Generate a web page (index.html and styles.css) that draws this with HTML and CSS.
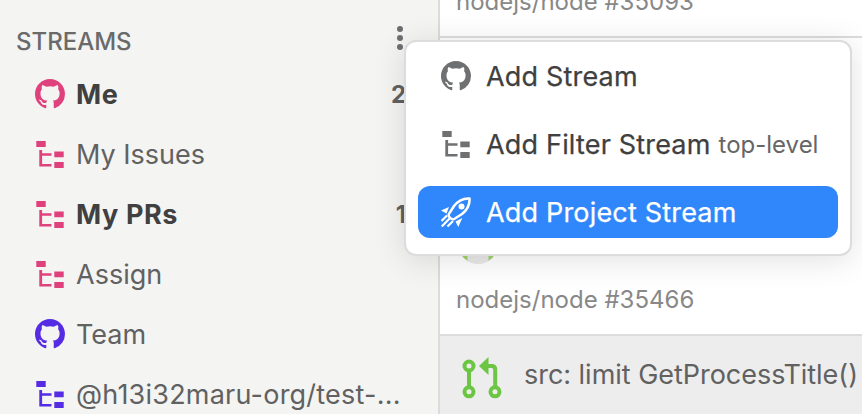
FILE: index.html
```html
<!DOCTYPE html>
<html lang="en">
<head>
<meta charset="utf-8">
<title>Streams</title>
<link rel="stylesheet" href="styles.css">
</head>
<body>
<svg class="defs" aria-hidden="true">
  <symbol id="github" viewBox="0 0 16 16"><path d="M8 0C3.58 0 0 3.58 0 8c0 3.54 2.29 6.53 5.47 7.59.4.07.55-.17.55-.38 0-.19-.01-.82-.01-1.49-2.01.37-2.53-.49-2.69-.94-.09-.23-.48-.94-.82-1.13-.28-.15-.68-.52-.01-.53.63-.01 1.08.58 1.23.82.72 1.21 1.87.87 2.33.66.07-.52.28-.87.51-1.07-1.78-.2-3.64-.89-3.64-3.95 0-.87.31-1.59.82-2.15-.08-.2-.36-1.02.08-2.12 0 0 .67-.21 2.2.82.64-.18 1.32-.27 2-.27.68 0 1.36.09 2 .27 1.53-1.04 2.2-.82 2.2-.82.44 1.1.16 1.92.08 2.12.51.56.82 1.27.82 2.15 0 3.07-1.87 3.75-3.65 3.95.29.25.54.73.54 1.48 0 1.07-.01 1.93-.01 2.2 0 .21.15.46.55.38A8.01 8.01 0 0 0 16 8c0-4.42-3.58-8-8-8z"/></symbol>
  <symbol id="tree" viewBox="0 0 30 30"><path d="M1.3 2h9.4v6H1.3zM19.3 12.4h9.4v5.8h-9.4zM19.3 23h9.4v6h-9.4zM4.3 11h2.8v3.300h9.400v2.400H7.1v8.400h9.400v2.400H4.3z"/></symbol>
</svg>
<div class="app">
  <aside class="sidebar">
    <header class="heading"><span>STREAMS</span><svg class="more" viewBox="0 0 6 24"><circle cx="3" cy="3" r="3"/><circle cx="3" cy="12" r="3"/><circle cx="3" cy="21" r="3"/></svg></header>
    <div class="stream unread pink"><svg class="icon"><use href="#github"/></svg><span class="name">Me</span><span class="count">2</span></div>
    <div class="stream pink"><svg class="icon"><use href="#tree"/></svg><span class="name">My Issues</span></div>
    <div class="stream unread pink"><svg class="icon"><use href="#tree"/></svg><span class="name">My PRs</span><span class="count">1</span></div>
    <div class="stream pink"><svg class="icon"><use href="#tree"/></svg><span class="name">Assign</span></div>
    <div class="stream violet"><svg class="icon"><use href="#github"/></svg><span class="name">Team</span></div>
    <div class="stream violet"><svg class="icon"><use href="#tree"/></svg><span class="name org">@h13i32maru-org/test-...</span></div>
  </aside>
  <main class="issues">
    <article class="issue first"><div class="repo">nodejs/node #35093</div></article>
    <article class="issue second">
      <svg class="avatar" viewBox="0 0 40 40"><circle cx="20" cy="20" r="20" fill="#e9e9e9"/><path d="M3 30.5h6.500v6.200A20 20 0 0 1 3 30.500zM30.500 30.500H37a20 20 0 0 1-6.500 6.200z" fill="#9ed465"/></svg>
      <div class="repo">nodejs/node #35466</div>
    </article>
    <article class="issue read">
      <svg class="pull" viewBox="0 0 40 42" fill="none" stroke="#6cc644" stroke-width="4"><circle cx="7" cy="9" r="4.500"/><circle cx="7" cy="34.800" r="4.500"/><circle cx="33" cy="34.800" r="4.500"/><path d="M7 13.500v17M33.200 30.500V12.500q0-3.500-3.500-3.500H26"/><path d="M17 9 26.500 0v18z" fill="#6cc644" stroke="none"/></svg>
      <span class="title">src: limit GetProcessTitle()</span>
    </article>
  </main>
</div>
<div class="menu">
  <div class="item"><svg class="icon"><use href="#github"/></svg><span class="label">Add Stream</span></div>
  <div class="item"><svg class="icon"><use href="#tree"/></svg><span class="label">Add Filter Stream</span><span class="hint">top-level</span></div>
  <div class="item active"><svg class="icon" viewBox="0 0 30 30"><g fill="none" stroke="currentColor" stroke-width="2.500" stroke-linejoin="round"><path d="M28.500 1.500C22 1 17 4 13 9L7.800 17.200c-.8 2.500 2.500 5.800 5 5L21 17c5-4 8-9 7.500-15.500z"/></g><g fill="currentColor"><circle cx="20.500" cy="9.500" r="3"/><path d="M0 13.500 8 10 5.500 16.500zM14.500 24.500l6.800-3.500L17.300 30z"/></g><path d="M6 18.500.500 24M8.500 21.500.8 29.500M12 24 6.500 29.500" fill="none" stroke="currentColor" stroke-width="2.200"/></svg><span class="label">Add Project Stream</span></div>
</div>
</body>
</html>
```
FILE: styles.css
```css
* { box-sizing: border-box; }
body {
  margin: 0;
  width: 862px;
  height: 414px;
  overflow: hidden;
  position: relative;
  background: #fff;
  font-family: Inter, "Liberation Sans", sans-serif;
  font-size: 27px;
  color: #616161;
}
.defs { position: absolute; width: 0; height: 0; }
.app { display: flex; height: 414px; }
.sidebar {
  flex: none;
  width: 440px;
  background: #f4f4f3;
  border-right: 2px solid #dcdcdc;
  overflow: hidden;
}
.heading {
  display: flex;
  align-items: center;
  justify-content: space-between;
  height: 64px;
  padding: 18px 35px 0 16px;
  font-size: 24px;
  font-weight: 500;
  color: #6a6a6a;
}
.more { width: 6px; height: 24px; margin-top: -6px; fill: #6e6e73; }
.stream {
  display: flex;
  align-items: center;
  height: 60px;
  padding: 0 32px 0 35px;
  white-space: nowrap;
}
.stream:last-child { height: 50px; padding-top: 10px; }
.stream:last-child > * { flex: none; }
.icon { flex: none; width: 30px; height: 30px; fill: currentColor; }
.name { margin-left: 11px; color: #616161; }
.org { letter-spacing: .22px; }
.unread .name { color: #404040; font-weight: 700; letter-spacing: .6px; }
.count { margin-left: auto; font-size: 24px; font-weight: 700; color: #616161; }
.pink { color: #df417d; }
.violet { color: #552be3; }
.issues { flex: 1; min-width: 0; }
.issue { white-space: nowrap; border-bottom: 2px solid #dcdcdc; }
.repo { padding-left: 16px; font-size: 24px; line-height: 30px; color: #888; }
.first { display: flex; align-items: flex-end; height: 38px; padding-bottom: 19px; }
.second { height: 298px; padding-top: 186px; }
.avatar { display: block; width: 40px; height: 40px; margin: 0 0 21px 18px; }
.issue.read { display: flex; height: 78px; padding: 21px 0 0 22px; background: #ededed; border-bottom: 0; }
.pull { flex: none; width: 40px; height: 42px; margin-right: 22px; }
.title { line-height: 36px; letter-spacing: -.03px; }
.menu {
  position: absolute;
  left: 404px;
  top: 40px;
  width: 448px;
  height: 216px;
  padding: 8px 12px;
  background: #fff;
  border: 2px solid #dcdcdc;
  border-radius: 12px;
  box-shadow: 0 4px 32px rgba(0, 0, 0, .12);
}
.item {
  display: flex;
  align-items: center;
  height: 52px;
  margin-bottom: 16px;
  padding-left: 23px;
  border-radius: 12px;
  color: #6f7072;
  white-space: nowrap;
}
.item:last-child { margin-bottom: 0; }
.label { margin-left: 15px; color: #404040; letter-spacing: .18px; -webkit-text-stroke: .25px currentColor; }
.hint { margin-left: 8px; font-size: 24px; color: #666; }
.active { background: #3087fb; color: #fff; }
.active .label { color: #fff; }
```
